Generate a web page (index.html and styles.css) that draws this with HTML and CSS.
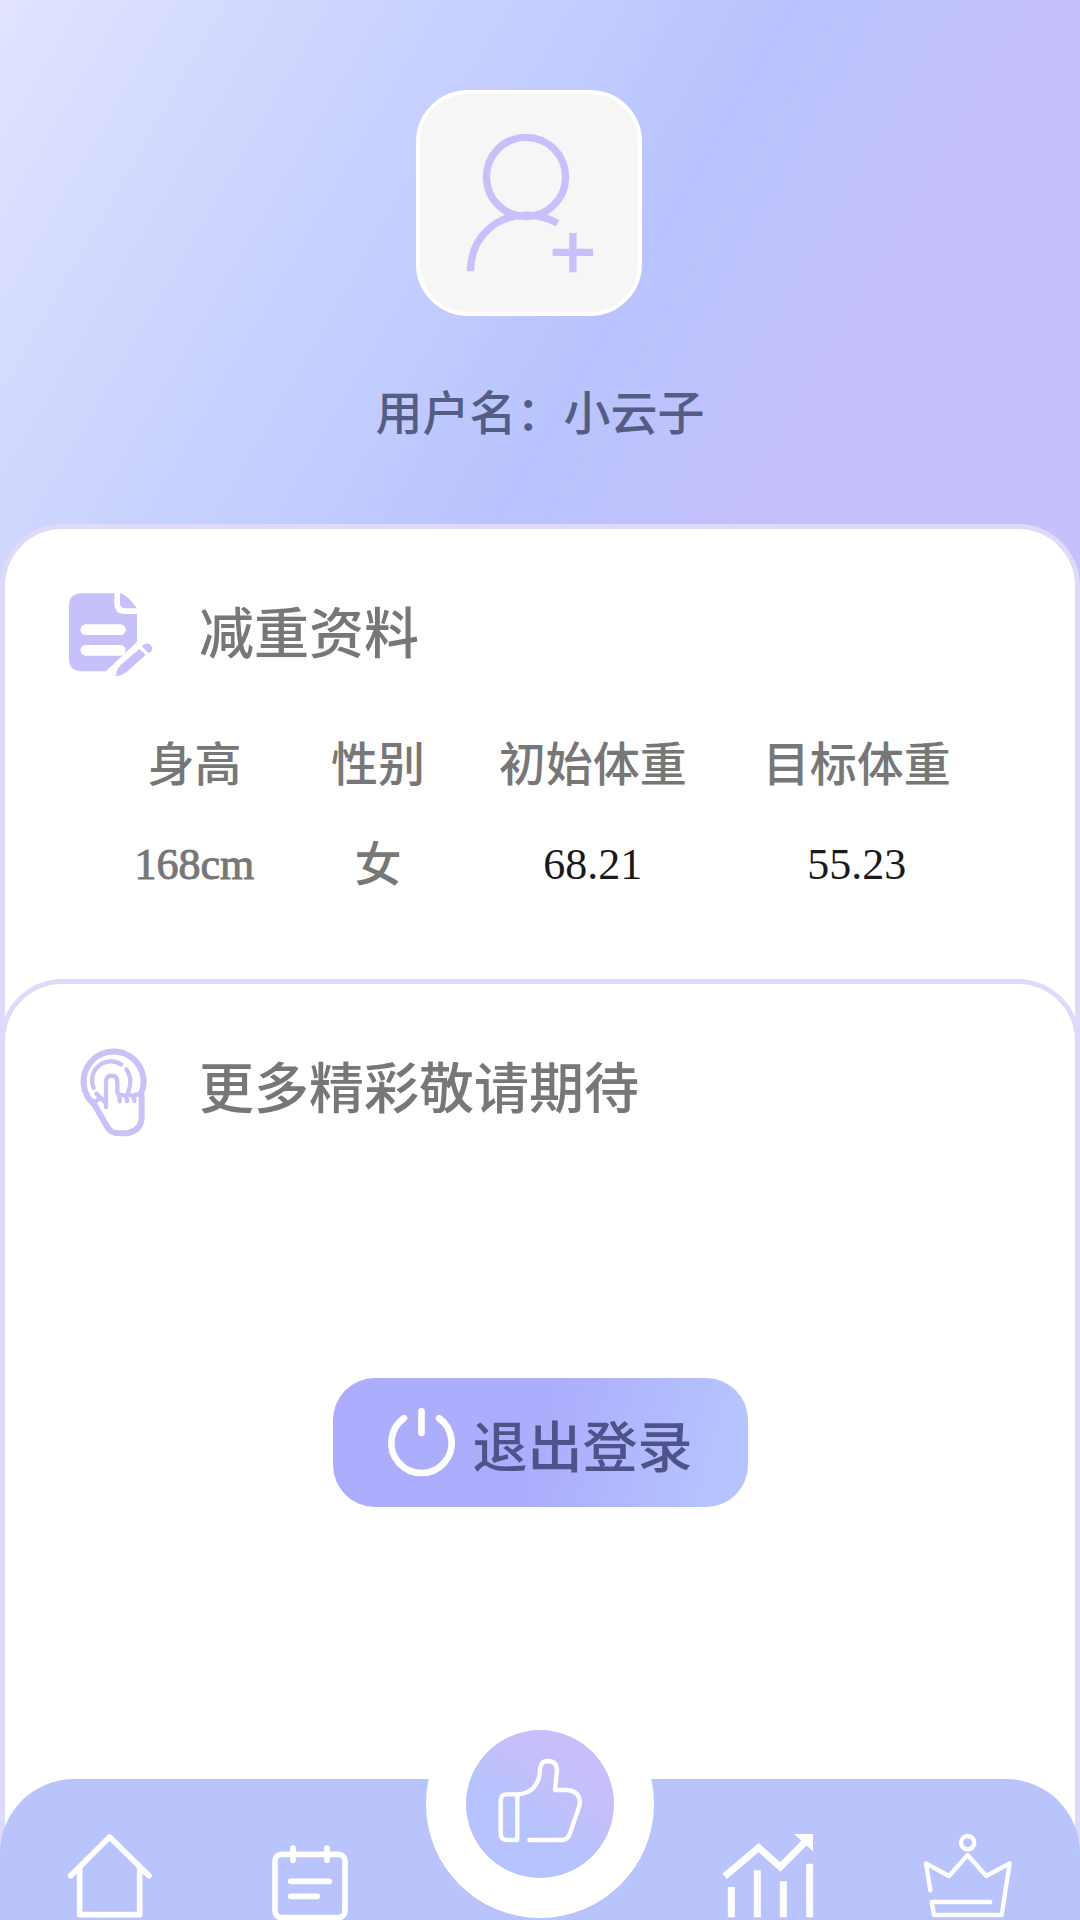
FILE: index.html
```html
<!DOCTYPE html>
<html lang="zh-CN">
<head>
  <meta charset="UTF-8" />
  <meta name="viewport" content="width=device-width, initial-scale=1.0">
  <title>个人中心</title>
  <link rel="stylesheet" href="styles.css">
</head>
<body>

  <header class="profile">
    <button class="avatar" type="button" aria-label="上传头像">
      <svg viewBox="196 190 384 418" width="128" height="139">
        <circle cx="379" cy="319" r="119" />
        <path d="M212 603C212 500 290 434 380 434C415 434 445 442 474 458M520 488V606M459 546H581" />
      </svg>
    </button>
    <p class="username">用户名：小云子</p>
  </header>

  <main>
    <section class="card">
      <div class="card-title">
        <svg class="icon-doc" viewBox="207 278 252 264" width="84" height="88">
          <path d="M239 279H343V312Q345 341 372 341H411V424L318 513H239Q207 508 207 480V312Q209 283 239 279Z" />
          <path d="M360 279Q380 282 411 324H375Q360 322 360 308Z" />
          <path d="M418 446L437 463L380 515Q365 526 348 528Q350 505 362 494Z" />
          <path d="M425 438Q435 425 449 432Q461 440 454 453L446 459Z" />
          <path class="doc-lines" d="M257 388H361M257 450H361" />
        </svg>
        <h2>减重资料</h2>
      </div>
      <table class="stats">
        <thead>
          <tr>
            <th scope="col">身高</th>
            <th scope="col">性别</th>
            <th scope="col">初始体重</th>
            <th scope="col">目标体重</th>
          </tr>
        </thead>
        <tbody>
          <tr>
            <td class="height">168cm</td>
            <td class="gender">女</td>
            <td class="weight">68.21</td>
            <td class="weight">55.23</td>
          </tr>
        </tbody>
      </table>
    </section>

    <section class="card card-more">
      <div class="card-title">
        <svg class="icon-touch" viewBox="211 263 252 264" width="84" height="88">
          <path class="thick" d="M284 430A90 90 0 1 1 427 400" />
          <path class="thick" d="M282 424L326 500Q337 519 360 519H382Q429 512 429 470V406" />
          <path d="M285 383A57 57 0 0 1 368 312M383 327Q405 358 388 395" />
          <path d="M322 441V367Q322 346 339 346Q356 346 356 367V396L363 408V423M363 404Q385 401 385 422M385 404Q407 401 407 422M407 404Q426 399 431 410M293 400L322 428M284 428L306 412" />
        </svg>
        <h2>更多精彩敬请期待</h2>
      </div>
      <button class="logout" type="button">
        <svg viewBox="203 143 208 208" width="69" height="69">
          <path d="M254 174A91 91 0 1 0 360 174M307 153V218" />
        </svg>
        退出登录
      </button>
    </section>
  </main>

  <nav class="tabbar">
    <a href="#home" aria-label="首页">
      <svg viewBox="206 221 252 258" width="84" height="86">
        <path d="M214 346L331 230L449 346M241 322V463H421V322" />
      </svg>
    </a>
    <a href="#plan" aria-label="计划">
      <svg viewBox="804 221 252 258" width="84" height="86">
        <rect x="825" y="282" width="210" height="190" rx="20" />
        <path d="M879 263V300M981 263V300M872 363H988M872 408H952" />
      </svg>
    </a>
    <a class="like" href="#like" aria-label="点赞">
      <span class="like-circle">
        <svg viewBox="196 90 444 444" width="148" height="148">
          <path d="M350 283H318Q300 283 300 302V400Q300 420 318 420H350Z" />
          <path d="M350 283C395 281 418 250 418 207Q420 183 442 183Q468 184 469 210L463 270H500Q542 275 537 315L508 400Q500 420 485 420H386" />
        </svg>
      </span>
    </a>
    <a href="#chart" aria-label="趋势">
      <svg class="icon-chart" viewBox="132 221 276 258" width="92" height="86">
        <path d="M134 348L236 262L301 320L375 245" />
        <path d="M154 380V471M232 330V471M310 363V471M389 310V471" />
        <polygon points="342,221 399,221 399,273" />
      </svg>
    </a>
    <a href="#rank" aria-label="排行">
      <svg class="icon-crown" viewBox="736 221 264 258" width="88" height="86">
        <circle cx="861" cy="247" r="20" />
        <path d="M749 390L736 309L805 347L861 284L917 347L987 309L963 464H760L753 425H929" />
      </svg>
    </a>
  </nav>

</body>
</html>
```
FILE: styles.css
```css
* {
  box-sizing: border-box;
}

body {
  font-family: "Noto Sans CJK SC", sans-serif;
  margin: 0;
  min-height: 100vh;
  display: flex;
  flex-direction: column;
  background-color: white;
  color: #777777;
}

button {
  font-family: inherit;
  border: none;
  padding: 0;
  cursor: pointer;
}

svg {
  display: block;
  overflow: visible;
  fill: none;
  stroke-linecap: round;
  stroke-linejoin: round;
}

/* Profile header */
.profile {
  display: flex;
  flex-direction: column;
  align-items: center;
  padding: 90px 0 156px;
  background: linear-gradient(120deg, #e2e4ff 0%, #d0d8fe 20%, #b9c4fe 56%, #c5bffb 76%, #c6c1fc 100%);
}

.avatar {
  display: flex;
  align-items: center;
  justify-content: center;
  width: 226px;
  height: 226px;
  margin-right: 22px;
  border: 4px solid white;
  border-radius: 52px;
  background-color: #f6f6f7;
}

.avatar svg {
  stroke: #c8c0f9;
  stroke-width: 22;
  stroke-linecap: butt;
}

.username {
  margin: 66px 0 0;
  font-size: 47px;
  font-weight: 500;
  line-height: 56px;
  color: #565d85;
}

/* Cards */
main {
  flex: 1;
  display: flex;
  flex-direction: column;
}

.card {
  margin-top: -70px;
  padding: 64px 64px 132px;
  border: 5px solid #dddafa;
  border-bottom: none;
  border-radius: 62px 62px 0 0;
  background-color: white;
}

.card-more {
  flex: 1;
  padding-bottom: 180px;
}

.card-title {
  display: flex;
  align-items: flex-start;
  gap: 46px;
}

.card-title h2 {
  margin: 0;
  font-size: 55px;
  font-weight: 500;
  line-height: 72px;
}

.icon-doc {
  fill: #c7c1fb;
}

.doc-lines {
  stroke: white;
  stroke-width: 32;
}

.icon-touch {
  stroke: #c9c2f6;
  stroke-width: 13;
}

.icon-touch .thick {
  stroke-width: 18;
}

/* Weight data */
.stats {
  width: 95%;
  margin: 28px 0 0 36px;
  border-collapse: collapse;
  table-layout: fixed;
  text-align: center;
}

.stats th,
.stats td {
  height: 104px;
  padding: 0;
  font-weight: 500;
  line-height: 60px;
}

.stats th,
.stats .gender {
  font-size: 47px;
}

.stats td {
  font-family: "Liberation Serif", "Noto Sans CJK SC", serif;
  font-size: 44px;
}

.stats th:nth-child(1) {
  width: 20%;
}

.stats th:nth-child(2) {
  width: 21%;
}

.stats th:nth-child(3) {
  width: 27%;
}

.stats .height {
  -webkit-text-stroke: 1px #777777;
}

.stats .weight {
  color: #1a1a1a;
}

/* Logout button */
.logout {
  display: flex;
  align-items: center;
  justify-content: center;
  gap: 16px;
  width: 415px;
  height: 129px;
  margin: 242px auto 0;
  border-radius: 42px;
  background: linear-gradient(105deg, #adadfd 0%, #adadfd 50%, #b5c3fe 90%);
  font-size: 55px;
  font-weight: 500;
  color: #50538a;
}

.logout svg {
  stroke: white;
  stroke-width: 20;
}

/* Bottom tab bar */
.tabbar {
  position: fixed;
  left: 0;
  right: 0;
  bottom: 0;
  display: grid;
  grid-template-columns: 11fr 9fr 14fr 9fr 11fr;
  justify-items: center;
  height: 141px;
  border-radius: 74px 74px 0 0;
  background-color: #b9c4fc;
}

.tabbar a {
  padding-top: 55px;
}

.tabbar svg {
  stroke: white;
  stroke-width: 17;
}

.tabbar .like {
  display: flex;
  align-items: center;
  justify-content: center;
  width: 228px;
  height: 228px;
  margin-top: -89px;
  padding: 0;
  border-radius: 50%;
  background-color: white;
}

.like-circle {
  border-radius: 50%;
  background: linear-gradient(215deg, #c8bffb 15%, #c5bffb 35%, #b7c3fe 60%);
}

.tabbar .like svg {
  stroke-width: 13;
}

.tabbar .icon-chart {
  stroke-width: 21;
  stroke-linecap: butt;
  stroke-linejoin: miter;
}

.icon-chart polygon {
  fill: white;
  stroke: none;
}

.tabbar .icon-crown {
  stroke-width: 13;
}
```
